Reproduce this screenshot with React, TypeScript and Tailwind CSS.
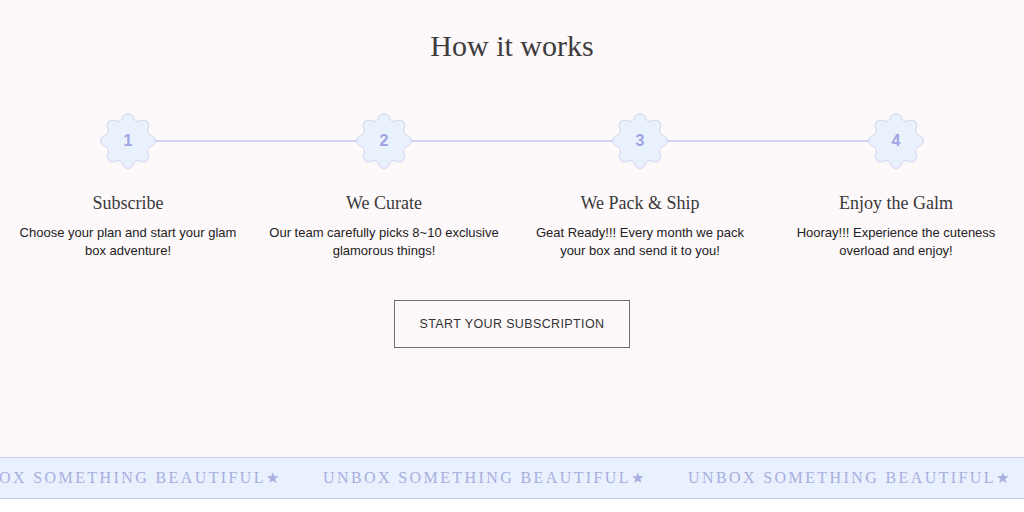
import type { ReactNode } from 'react'

const STEPS = [
  { n: 1, title: 'Subscribe', text: 'Choose your plan and start your glam box adventure!' },
  { n: 2, title: 'We Curate', text: 'Our team carefully picks 8~10 exclusive glamorous things!' },
  { n: 3, title: 'We Pack & Ship', text: 'Geat Ready!!! Every month we pack your box and send it to you!' },
  { n: 4, title: 'Enjoy the Galm', text: 'Hooray!!! Experience the cuteness overload and enjoy!' },
]

// 8-lobed scalloped badge outline
const scallop = (() => {
  const pts: string[] = []
  const steps = 200
  for (let i = 0; i <= steps; i++) {
    const t = (i / steps) * Math.PI * 2
    const c = Math.cos(8 * t)
    const r = 24.5 + 2.8 * Math.sign(c) * Math.pow(Math.abs(c), 0.7)
    const x = 28 + r * Math.cos(t - Math.PI / 2)
    const y = 28 + r * Math.sin(t - Math.PI / 2)
    pts.push(`${i === 0 ? 'M' : 'L'}${x.toFixed(2)} ${y.toFixed(2)}`)
  }
  return pts.join(' ') + 'Z'
})()

function Badge({ children }: { children: ReactNode }) {
  return (
    <div className="relative w-14 h-14 flex items-center justify-center">
      <svg viewBox="0 0 56 56" className="absolute inset-0 w-14 h-14">
        <path d={scallop} fill="#e9f1fd" stroke="#cdd0f0" strokeWidth="1" />
      </svg>
      <span className="relative text-[16px] font-bold text-[#9da5e2] font-['Liberation_Sans',sans-serif]">
        {children}
      </span>
    </div>
  )
}

function MarqueeItem() {
  return (
    <span className="shrink-0 flex items-center whitespace-nowrap">
      UNBOX SOMETHING BEAUTIFUL
      <span className="text-[15px] tracking-normal">★</span>
    </span>
  )
}

export default function App() {
  return (
    <div className="w-[1024px] h-[512px] bg-white flex flex-col overflow-hidden">
      <section className="bg-[#fdf8fa] h-[457px] flex flex-col items-center pt-[27px]">
        <h2 className="font-['Liberation_Serif',serif] text-[30px] text-[#3d3d3d] leading-[38px]">
          How it works
        </h2>

        {/* Steps */}
        <div className="relative w-full grid grid-cols-4 mt-[48px]">
          <div className="absolute left-[128px] right-[130px] top-[27px] h-[2px] bg-[#d2d2f2]" />
          {STEPS.map((s) => (
            <div key={s.n} className="relative flex flex-col items-center text-center px-3">
              <Badge>{s.n}</Badge>
              <h3 className="mt-[22px] font-['Liberation_Serif',serif] text-[18px] text-[#3a3a3a] leading-[24px]">
                {s.title}
              </h3>
              <p className="mt-[9px] max-w-[236px] font-['Liberation_Sans',sans-serif] text-[13px] leading-[18px] text-[#222]">
                {s.text}
              </p>
            </div>
          ))}
        </div>

        <button className="mt-[40px] w-[236px] h-[48px] border border-[#707070] font-['Liberation_Sans',sans-serif] text-[12.5px] tracking-[0.03em] text-[#333]">
          START YOUR SUBSCRIPTION
        </button>
      </section>

      {/* Marquee band */}
      <div className="h-[42px] bg-[#e8f1fd] border-y border-[#c7cae8] flex items-center overflow-hidden">
        <div className="flex gap-[44px] -ml-[42px] font-['Liberation_Serif',serif] text-[16px] tracking-[0.15em] text-[#a9aee0]">
          <MarqueeItem />
          <MarqueeItem />
          <MarqueeItem />
          <MarqueeItem />
        </div>
      </div>
    </div>
  )
}
